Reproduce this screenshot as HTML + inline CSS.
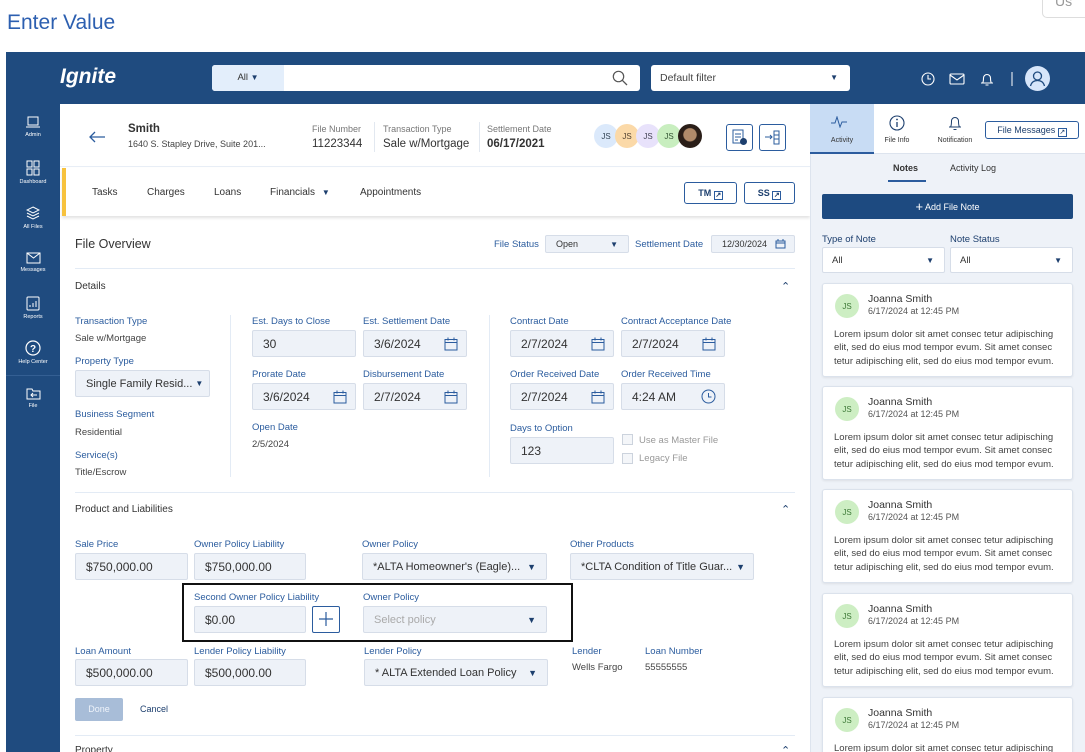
<!DOCTYPE html>
<html style="width:1085px;height:752px;overflow:hidden"><head><meta charset="utf-8">
<style>
*{box-sizing:border-box;margin:0;padding:0}
body{width:1085px;height:752px;overflow:hidden;background:#fff;font-family:"Liberation Sans",sans-serif;position:relative;color:#333}
.a{position:absolute}
.lbl{position:absolute;font-size:9.5px;color:#2b5c9e;white-space:nowrap}
.val{position:absolute;font-size:9.5px;color:#444;white-space:nowrap}
.box{position:absolute;background:#eef2f8;border:1px solid #d6dde8;border-radius:2px;font-size:12px;color:#333;padding-left:10px;display:flex;align-items:center;white-space:nowrap;overflow:hidden}
.box svg{position:absolute;right:8px}
.dd{position:absolute;right:10px;font-size:9px;color:#1d3f6e}
.sb{position:absolute;left:6px;width:54px;text-align:center;color:#fff;font-size:5.5px}
.sb svg{display:block;margin:0 auto 3px}
.card{position:absolute;left:822px;width:251px;height:94px;background:#fff;border:1px solid #dbe2ec;border-radius:3px;box-shadow:0 1px 2px rgba(0,0,0,.08)}
.card .av{position:absolute;left:12px;top:10px;width:24px;height:24px;border-radius:50%;background:#cdeec3;color:#3e7a38;font-size:8px;display:flex;align-items:center;justify-content:center}
.card .n{position:absolute;left:45px;top:9px;font-size:10.5px;color:#333}
.card .d{position:absolute;left:45px;top:22px;font-size:9px;color:#555}
.card .t{position:absolute;left:11px;top:44px;width:245px;font-size:9.5px;line-height:13.3px;color:#444;white-space:nowrap}
.hr{position:absolute;height:1px;background:#e3ebf5}
.ti{position:absolute;font-size:10px;color:#333}
</style></head><body>
<div class="a" style="left:7px;top:11px;font-size:21px;color:#2c5fb0">Enter Value</div>
<div class="a" style="left:1042px;top:-10px;width:50px;height:28px;border:1px solid #ddd;border-radius:5px;background:#fff;font-size:14px;color:#999;padding-left:12px;padding-top:2px">Us</div>

<div class="a" style="left:6px;top:52px;width:1079px;height:52px;background:#1f4b7f"></div>
<div class="a" style="left:6px;top:104px;width:54px;height:648px;background:#1f4b7f"></div>
<div class="a" style="left:60px;top:77px;transform:translateY(-50%);font-size:21px;font-weight:bold;font-style:italic;color:#fff">Ignite</div>
<div class="a" style="left:212px;top:65px;width:428px;height:26px;background:#fff;border-radius:3px;overflow:hidden">
 <div class="a" style="left:0;top:0;width:72px;height:26px;background:#e3eefb;font-size:9.5px;color:#333;text-align:center;line-height:26px">All <span style="color:#1d3f6e;font-size:8px">▼</span></div>
 <svg class="a" style="left:400px;top:5px" width="16" height="16" viewBox="0 0 16 16"><circle cx="6.5" cy="6.5" r="5.2" fill="none" stroke="#555" stroke-width="1.2"/><path d="M10.3 10.3L15 15" stroke="#555" stroke-width="1.3"/></svg>
</div>
<div class="a" style="left:651px;top:65px;width:199px;height:26px;background:#fff;border-radius:3px;font-size:10.5px;color:#444;line-height:26px;padding-left:9px">Default filter<span style="position:absolute;right:12px;font-size:8px;color:#1d3f6e">▼</span></div>
<svg class="a" style="left:920px;top:70px" width="120" height="18" viewBox="0 0 120 18">
 <circle cx="8" cy="9" r="6" fill="none" stroke="#fff" stroke-width="1.1"/><path d="M8 5v4h3" stroke="#fff" fill="none" stroke-width="1.1"/>
 <rect x="30" y="4" width="14" height="10" rx="1" fill="none" stroke="#fff" stroke-width="1.1"/><path d="M30 5l7 5 7-5" stroke="#fff" fill="none" stroke-width="1.1"/>
 <path d="M61 13h12M62.5 13c1-1 1-3 1-5a3.5 3.5 0 017 0c0 2 0 4 1 5M65.5 15h3" stroke="#fff" fill="none" stroke-width="1.1"/>
 <path d="M92 2v14" stroke="#fff" stroke-width="1"/>
</svg>
<div class="a" style="left:1025px;top:66px;width:25px;height:25px;border-radius:50%;background:#d7e6fa"></div>
<svg class="a" style="left:1025px;top:66px" width="25" height="25" viewBox="0 0 25 25"><circle cx="12.5" cy="10" r="4" fill="none" stroke="#1f4b7f" stroke-width="1.3"/><path d="M5.5 20c1-4 4-5.5 7-5.5s6 1.5 7 5.5" fill="none" stroke="#1f4b7f" stroke-width="1.3"/></svg>

<div class="sb" style="top:116px"><svg width="14" height="13" viewBox="0 0 14 13"><rect x="2" y="1" width="10" height="8" fill="none" stroke="#fff"/><path d="M0 11h14" stroke="#fff"/></svg>Admin</div>
<div class="sb" style="top:160px"><svg width="14" height="16" viewBox="0 0 14 16"><rect x="1" y="1" width="5" height="6" fill="none" stroke="#fff"/><rect x="8" y="1" width="5" height="6" fill="none" stroke="#fff"/><rect x="1" y="9" width="5" height="6" fill="none" stroke="#fff"/><rect x="8" y="9" width="5" height="6" fill="none" stroke="#fff"/></svg>Dashboard</div>
<div class="sb" style="top:206px"><svg width="14" height="15" viewBox="0 0 14 15"><path d="M7 1l6 3-6 3-6-3z M1 7l6 3 6-3 M1 10l6 3 6-3" fill="none" stroke="#fff"/></svg>All Files</div>
<div class="sb" style="top:252px"><svg width="15" height="12" viewBox="0 0 15 12"><rect x="1" y="1" width="13" height="10" fill="none" stroke="#fff"/><path d="M1 1l6.5 5 6.5-5" fill="none" stroke="#fff"/></svg>Messages</div>
<div class="sb" style="top:296px"><svg width="14" height="15" viewBox="0 0 14 15"><rect x="1" y="1" width="12" height="13" rx="1" fill="none" stroke="#fff"/><path d="M4 11v-2M7 11v-4M10 11v-6" stroke="#fff"/></svg>Reports</div>
<div class="sb" style="top:340px"><svg width="16" height="16" viewBox="0 0 16 16"><circle cx="8" cy="8" r="7" fill="none" stroke="#fff" stroke-width="1.2"/><text x="8" y="12" font-size="10" fill="#fff" text-anchor="middle" font-family="Liberation Sans" font-weight="bold">?</text></svg>Help Center</div>
<div class="a" style="left:6px;top:375px;width:54px;height:1px;background:#345f93"></div>
<div class="sb" style="top:387px"><svg width="15" height="13" viewBox="0 0 15 13"><path d="M1 2h5l1 2h7v8H1z" fill="none" stroke="#fff"/><path d="M11 8H5m2-2l-2 2 2 2" fill="none" stroke="#fff"/></svg>File</div>

<div class="a" style="left:60px;top:104px;width:750px;height:648px;background:#fff"></div>
<svg class="a" style="left:88px;top:130px" width="18" height="14" viewBox="0 0 18 14"><path d="M17 7H2M7 2L2 7l5 5" fill="none" stroke="#2b5c9e" stroke-width="1.3"/></svg>
<div class="a" style="left:128px;top:123px;font-size:11.5px;font-weight:bold;color:#333">Smith</div>
<div class="a" style="left:128px;top:139px;font-size:9px;color:#444">1640 S. Stapley Drive, Suite 201...</div>
<div class="a" style="left:312px;top:124px;font-size:9px;color:#777">File Number</div>
<div class="a" style="left:312px;top:138px;font-size:11.5px;color:#333">11223344</div>
<div class="a" style="left:374px;top:122px;width:1px;height:30px;background:#e2e8f0"></div>
<div class="a" style="left:383px;top:124px;font-size:9px;color:#777">Transaction Type</div>
<div class="a" style="left:383px;top:138px;font-size:11.5px;color:#333">Sale w/Mortgage</div>
<div class="a" style="left:479px;top:122px;width:1px;height:30px;background:#e2e8f0"></div>
<div class="a" style="left:487px;top:124px;font-size:9px;color:#777">Settlement Date</div>
<div class="a" style="left:487px;top:138px;font-size:11.5px;font-weight:bold;color:#333">06/17/2021</div>
<div class="a" style="left:594px;top:124px;width:24px;height:24px;border-radius:50%;background:#dbe9fb;font-size:8px;color:#345;display:flex;align-items:center;justify-content:center">JS</div>
<div class="a" style="left:615px;top:124px;width:24px;height:24px;border-radius:50%;background:#fbd9a8;font-size:8px;color:#543;display:flex;align-items:center;justify-content:center">JS</div>
<div class="a" style="left:636px;top:124px;width:24px;height:24px;border-radius:50%;background:#e8e2fb;font-size:8px;color:#445;display:flex;align-items:center;justify-content:center">JS</div>
<div class="a" style="left:657px;top:124px;width:24px;height:24px;border-radius:50%;background:#c8eebf;font-size:8px;color:#353;display:flex;align-items:center;justify-content:center">JS</div>
<div class="a" style="left:678px;top:124px;width:24px;height:24px;border-radius:50%;background:radial-gradient(circle at 50% 45%,#b08a6a 0 35%,#2a1e18 40%)"></div>
<div class="a" style="left:726px;top:124px;width:27px;height:27px;border:1.2px solid #2b5c9e;border-radius:3px"></div>
<svg class="a" style="left:731px;top:129px" width="17" height="17" viewBox="0 0 17 17"><rect x="2" y="1" width="10" height="13" fill="none" stroke="#2b5c9e"/><path d="M4 5h6M4 8h6M4 11h3" stroke="#2b5c9e"/><circle cx="12.5" cy="12.5" r="3.5" fill="#1d3f6e"/></svg>
<div class="a" style="left:759px;top:124px;width:27px;height:27px;border:1.2px solid #2b5c9e;border-radius:3px"></div>
<svg class="a" style="left:764px;top:129px" width="17" height="17" viewBox="0 0 17 17"><path d="M1 8h7M6 6l2 2-2 2" fill="none" stroke="#2b5c9e"/><rect x="10" y="2" width="5" height="13" fill="none" stroke="#2b5c9e"/><path d="M10 6h5M10 10h5" stroke="#2b5c9e"/></svg>
<div class="hr" style="left:60px;top:166px;width:750px;background:#e8eef6"></div>
<div class="a" style="left:62px;top:168px;width:748px;height:48px;background:#fff;box-shadow:0 2px 3px rgba(0,0,0,.12)"></div>
<div class="a" style="left:62px;top:168px;width:4px;height:48px;background:#f7c23d"></div>
<div class="ti" style="left:92px;top:187px">Tasks</div>
<div class="ti" style="left:147px;top:187px">Charges</div>
<div class="ti" style="left:214px;top:187px">Loans</div>
<div class="ti" style="left:270px;top:187px">Financials <span style="color:#1d3f6e;font-size:8px;margin-left:4px">▼</span></div>
<div class="ti" style="left:360px;top:187px">Appointments</div>
<div class="a" style="left:684px;top:182px;width:53px;height:22px;border:1px solid #2b5c9e;border-radius:3px;font-size:9px;font-weight:bold;color:#1d3f6e;text-align:center;line-height:20px">TM <span style="display:inline-block;width:9px;height:9px;border:1px solid #2b5c9e;font-size:7px;line-height:7px;vertical-align:-1px">↗</span></div>
<div class="a" style="left:744px;top:182px;width:51px;height:22px;border:1px solid #2b5c9e;border-radius:3px;font-size:9px;font-weight:bold;color:#1d3f6e;text-align:center;line-height:20px">SS <span style="display:inline-block;width:9px;height:9px;border:1px solid #2b5c9e;font-size:7px;line-height:7px;vertical-align:-1px">↗</span></div>

<div class="a" style="left:75px;top:237px;font-size:12.5px;color:#333">File Overview</div>
<div class="lbl" style="left:494px;top:239px">File Status</div>
<div class="box" style="left:545px;top:235px;width:84px;height:18px;font-size:9px">Open<span class="dd" style="font-size:8px">▼</span></div>
<div class="lbl" style="left:635px;top:239px">Settlement Date</div>
<div class="box" style="left:711px;top:235px;width:84px;height:18px;font-size:9px">12/30/2024<svg width="11" height="10" viewBox="0 0 11 10" style="right:8px"><rect x="1" y="2" width="9" height="7" fill="none" stroke="#2b5c9e"/><path d="M1 4h9M3 0v2M8 0v2" stroke="#2b5c9e"/></svg></div>
<div class="hr" style="left:75px;top:268px;width:720px"></div>

<div class="a" style="left:75px;top:281px;font-size:10px;color:#333">Details</div>
<div class="a" style="left:781px;top:280px;font-size:11px;color:#1d3f6e">⌃</div>
<div class="lbl" style="left:75px;top:316px">Transaction Type</div>
<div class="val" style="left:75px;top:333px">Sale w/Mortgage</div>
<div class="lbl" style="left:75px;top:356px">Property Type</div>
<div class="box" style="left:75px;top:370px;width:135px;height:27px;font-size:11px">Single Family Resid... <span style="font-size:8px;color:#1d3f6e;margin-left:3px">▼</span></div>
<div class="lbl" style="left:75px;top:409px">Business Segment</div>
<div class="val" style="left:75px;top:427px">Residential</div>
<div class="lbl" style="left:75px;top:450px">Service(s)</div>
<div class="val" style="left:75px;top:467px">Title/Escrow</div>
<div class="a" style="left:230px;top:315px;width:1px;height:162px;background:#e3ebf5"></div>
<div class="a" style="left:489px;top:315px;width:1px;height:162px;background:#e3ebf5"></div>

<svg width="0" height="0" style="position:absolute"><defs><symbol id="cal" viewBox="0 0 14 14"><rect x="1" y="2.5" width="12" height="10.5" fill="none" stroke="#2b5c9e"/><path d="M1 5.5h12M4 0.5v3M10 0.5v3" stroke="#2b5c9e"/></symbol></defs></svg>

<div class="lbl" style="left:252px;top:316px">Est. Days to Close</div>
<div class="box" style="left:252px;top:330px;width:104px;height:27px">30</div>
<div class="lbl" style="left:363px;top:316px">Est. Settlement Date</div>
<div class="box" style="left:363px;top:330px;width:104px;height:27px">3/6/2024<svg width="14" height="14"><use href="#cal"/></svg></div>
<div class="lbl" style="left:252px;top:369px">Prorate Date</div>
<div class="box" style="left:252px;top:383px;width:104px;height:27px">3/6/2024<svg width="14" height="14"><use href="#cal"/></svg></div>
<div class="lbl" style="left:363px;top:369px">Disbursement Date</div>
<div class="box" style="left:363px;top:383px;width:104px;height:27px">2/7/2024<svg width="14" height="14"><use href="#cal"/></svg></div>
<div class="lbl" style="left:252px;top:422px">Open Date</div>
<div class="val" style="left:252px;top:439px">2/5/2024</div>

<div class="lbl" style="left:510px;top:316px">Contract Date</div>
<div class="box" style="left:510px;top:330px;width:104px;height:27px">2/7/2024<svg width="14" height="14"><use href="#cal"/></svg></div>
<div class="lbl" style="left:621px;top:316px">Contract Acceptance Date</div>
<div class="box" style="left:621px;top:330px;width:104px;height:27px">2/7/2024<svg width="14" height="14"><use href="#cal"/></svg></div>
<div class="lbl" style="left:510px;top:369px">Order Received Date</div>
<div class="box" style="left:510px;top:383px;width:104px;height:27px">2/7/2024<svg width="14" height="14"><use href="#cal"/></svg></div>
<div class="lbl" style="left:621px;top:369px">Order Received Time</div>
<div class="box" style="left:621px;top:383px;width:104px;height:27px">4:24 AM<svg width="15" height="15" viewBox="0 0 15 15"><circle cx="7.5" cy="7.5" r="6.5" fill="none" stroke="#2b5c9e"/><path d="M7.5 4v4h3" fill="none" stroke="#2b5c9e"/></svg></div>
<div class="lbl" style="left:510px;top:423px">Days to Option</div>
<div class="box" style="left:510px;top:437px;width:104px;height:27px">123</div>
<div class="a" style="left:622px;top:434px;width:11px;height:11px;border:1px solid #ccd3dd;background:#f4f6f9"></div>
<div class="val" style="left:639px;top:435px;color:#999">Use as Master File</div>
<div class="a" style="left:622px;top:453px;width:11px;height:11px;border:1px solid #ccd3dd;background:#f4f6f9"></div>
<div class="val" style="left:639px;top:453px;color:#999">Legacy File</div>
<div class="hr" style="left:75px;top:492px;width:720px"></div>

<div class="a" style="left:75px;top:504px;font-size:10px;color:#333">Product and Liabilities</div>
<div class="a" style="left:781px;top:503px;font-size:11px;color:#1d3f6e">⌃</div>
<div class="lbl" style="left:75px;top:539px">Sale Price</div>
<div class="box" style="left:75px;top:553px;width:113px;height:27px">$750,000.00</div>
<div class="lbl" style="left:194px;top:539px">Owner Policy Liability</div>
<div class="box" style="left:194px;top:553px;width:112px;height:27px">$750,000.00</div>
<div class="lbl" style="left:362px;top:539px">Owner Policy</div>
<div class="box" style="left:362px;top:553px;width:185px;height:27px;font-size:11px">*ALTA Homeowner's (Eagle)...<span class="dd">▼</span></div>
<div class="lbl" style="left:570px;top:539px">Other Products</div>
<div class="box" style="left:570px;top:553px;width:184px;height:27px;font-size:11px">*CLTA Condition of Title Guar...<span class="dd" style="right:8px">▼</span></div>

<div class="a" style="left:182px;top:583px;width:391px;height:59px;border:2px solid #111"></div>
<div class="lbl" style="left:194px;top:592px">Second Owner Policy Liability</div>
<div class="box" style="left:194px;top:606px;width:112px;height:27px">$0.00</div>
<div class="a" style="left:312px;top:606px;width:28px;height:27px;border:1px solid #2b5c9e;border-radius:2px;background:#fff"></div>
<svg class="a" style="left:318px;top:611px" width="16" height="16" viewBox="0 0 16 16"><path d="M8 1v14M1 8h14" stroke="#2b5c9e" stroke-width="1.2"/></svg>
<div class="lbl" style="left:363px;top:592px">Owner Policy</div>
<div class="box" style="left:363px;top:606px;width:184px;height:27px;font-size:11px;color:#aaa">Select policy<span class="dd">▼</span></div>

<div class="lbl" style="left:75px;top:646px">Loan Amount</div>
<div class="box" style="left:75px;top:659px;width:113px;height:27px">$500,000.00</div>
<div class="lbl" style="left:194px;top:646px">Lender Policy Liability</div>
<div class="box" style="left:194px;top:659px;width:112px;height:27px">$500,000.00</div>
<div class="lbl" style="left:364px;top:646px">Lender Policy</div>
<div class="box" style="left:364px;top:659px;width:184px;height:27px;font-size:11px">* ALTA Extended Loan Policy<span class="dd">▼</span></div>
<div class="lbl" style="left:572px;top:646px">Lender</div>
<div class="val" style="left:572px;top:662px">Wells Fargo</div>
<div class="lbl" style="left:645px;top:646px">Loan Number</div>
<div class="val" style="left:645px;top:662px">55555555</div>
<div class="a" style="left:75px;top:698px;width:48px;height:23px;background:#a8bdd8;border-radius:2px;color:#eef3fa;font-size:9px;text-align:center;line-height:23px">Done</div>
<div class="a" style="left:140px;top:704px;font-size:9px;color:#1d3f6e">Cancel</div>
<div class="hr" style="left:75px;top:735px;width:720px"></div>
<div class="a" style="left:75px;top:745px;font-size:10px;color:#333">Property</div>
<div class="a" style="left:781px;top:744px;font-size:11px;color:#1d3f6e">⌃</div>

<div class="a" style="left:810px;top:104px;width:275px;height:648px;background:#eef2f8;border-left:1px solid #dde4ee"></div>
<div class="a" style="left:810px;top:104px;width:275px;height:50px;background:#fff;border-bottom:1px solid #dde4ee"></div>
<div class="a" style="left:810px;top:104px;width:64px;height:50px;background:#c8dcf4;border-bottom:2px solid #2b5c9e"></div>
<svg class="a" style="left:831px;top:116px" width="16" height="12" viewBox="0 0 16 12"><path d="M0 7h4l2-6 3 10 2-5h5" fill="none" stroke="#2b5c9e"/></svg>
<div class="a" style="left:810px;top:137px;width:64px;text-align:center;font-size:7px;color:#333">Activity</div>
<svg class="a" style="left:889px;top:115px" width="16" height="16" viewBox="0 0 16 16"><circle cx="8" cy="8" r="7" fill="none" stroke="#1d3f6e" stroke-width="1.1"/><path d="M8 7v5" stroke="#1d3f6e" stroke-width="1.3"/><circle cx="8" cy="4.5" r="0.9" fill="#1d3f6e"/></svg>
<div class="a" style="left:876px;top:137px;width:42px;text-align:center;font-size:7px;color:#333">File Info</div>
<svg class="a" style="left:947px;top:115px" width="16" height="16" viewBox="0 0 16 16"><path d="M2 12h12M3.5 12c1-1.5 1-3.5 1-6a3.5 3.5 0 017 0c0 2.5 0 4.5 1 6M6.5 14.5h3" fill="none" stroke="#1d3f6e" stroke-width="1"/></svg>
<div class="a" style="left:930px;top:137px;width:50px;text-align:center;font-size:7px;color:#333">Notification</div>
<div class="a" style="left:985px;top:121px;width:94px;height:18px;border:1px solid #2b5c9e;border-radius:3px;font-size:9px;color:#1d3f6e;text-align:center;line-height:16px">File Messages <span style="display:inline-block;width:9px;height:9px;border:1px solid #2b5c9e;font-size:7px;line-height:7px;vertical-align:-1px">↗</span></div>
<div class="a" style="left:893px;top:163px;font-size:9px;font-weight:bold;color:#333">Notes</div>
<div class="a" style="left:888px;top:180px;width:38px;height:1.5px;background:#2b5c9e"></div>
<div class="a" style="left:950px;top:163px;font-size:9px;color:#333">Activity Log</div>
<div class="a" style="left:822px;top:194px;width:251px;height:25px;background:#1d4a80;border-radius:2px;color:#fff;font-size:9px;text-align:center;line-height:25px"><span style="font-size:13px;vertical-align:-1px">+</span> Add File Note</div>
<div class="lbl" style="left:822px;top:234px;color:#1d3f6e">Type of Note</div>
<div class="a" style="left:822px;top:247px;width:123px;height:26px;background:#fff;border:1px solid #d6dde8;border-radius:2px;font-size:9.5px;padding:7px 0 0 9px">All<span class="dd" style="top:8px;font-size:8px">▼</span></div>
<div class="lbl" style="left:950px;top:234px;color:#1d3f6e">Note Status</div>
<div class="a" style="left:950px;top:247px;width:123px;height:26px;background:#fff;border:1px solid #d6dde8;border-radius:2px;font-size:9.5px;padding:7px 0 0 9px">All<span class="dd" style="top:8px;font-size:8px">▼</span></div>

<div class="card" style="top:283px"><div class="av">JS</div><div class="n">Joanna Smith</div><div class="d">6/17/2024 at 12:45 PM</div><div class="t">Lorem ipsum dolor sit amet consec tetur adipisching<br>elit, sed do eius mod tempor evum. Sit amet consec<br>tetur adipisching elit, sed do eius mod tempor evum.</div></div>
<div class="card" style="top:386px"><div class="av">JS</div><div class="n">Joanna Smith</div><div class="d">6/17/2024 at 12:45 PM</div><div class="t">Lorem ipsum dolor sit amet consec tetur adipisching<br>elit, sed do eius mod tempor evum. Sit amet consec<br>tetur adipisching elit, sed do eius mod tempor evum.</div></div>
<div class="card" style="top:489px"><div class="av">JS</div><div class="n">Joanna Smith</div><div class="d">6/17/2024 at 12:45 PM</div><div class="t">Lorem ipsum dolor sit amet consec tetur adipisching<br>elit, sed do eius mod tempor evum. Sit amet consec<br>tetur adipisching elit, sed do eius mod tempor evum.</div></div>
<div class="card" style="top:593px"><div class="av">JS</div><div class="n">Joanna Smith</div><div class="d">6/17/2024 at 12:45 PM</div><div class="t">Lorem ipsum dolor sit amet consec tetur adipisching<br>elit, sed do eius mod tempor evum. Sit amet consec<br>tetur adipisching elit, sed do eius mod tempor evum.</div></div>
<div class="card" style="top:697px;height:55px;border-bottom:none;border-radius:3px 3px 0 0"><div class="av">JS</div><div class="n">Joanna Smith</div><div class="d">6/17/2024 at 12:45 PM</div><div class="t">Lorem ipsum dolor sit amet consec tetur adipisching</div></div>
</body></html>
